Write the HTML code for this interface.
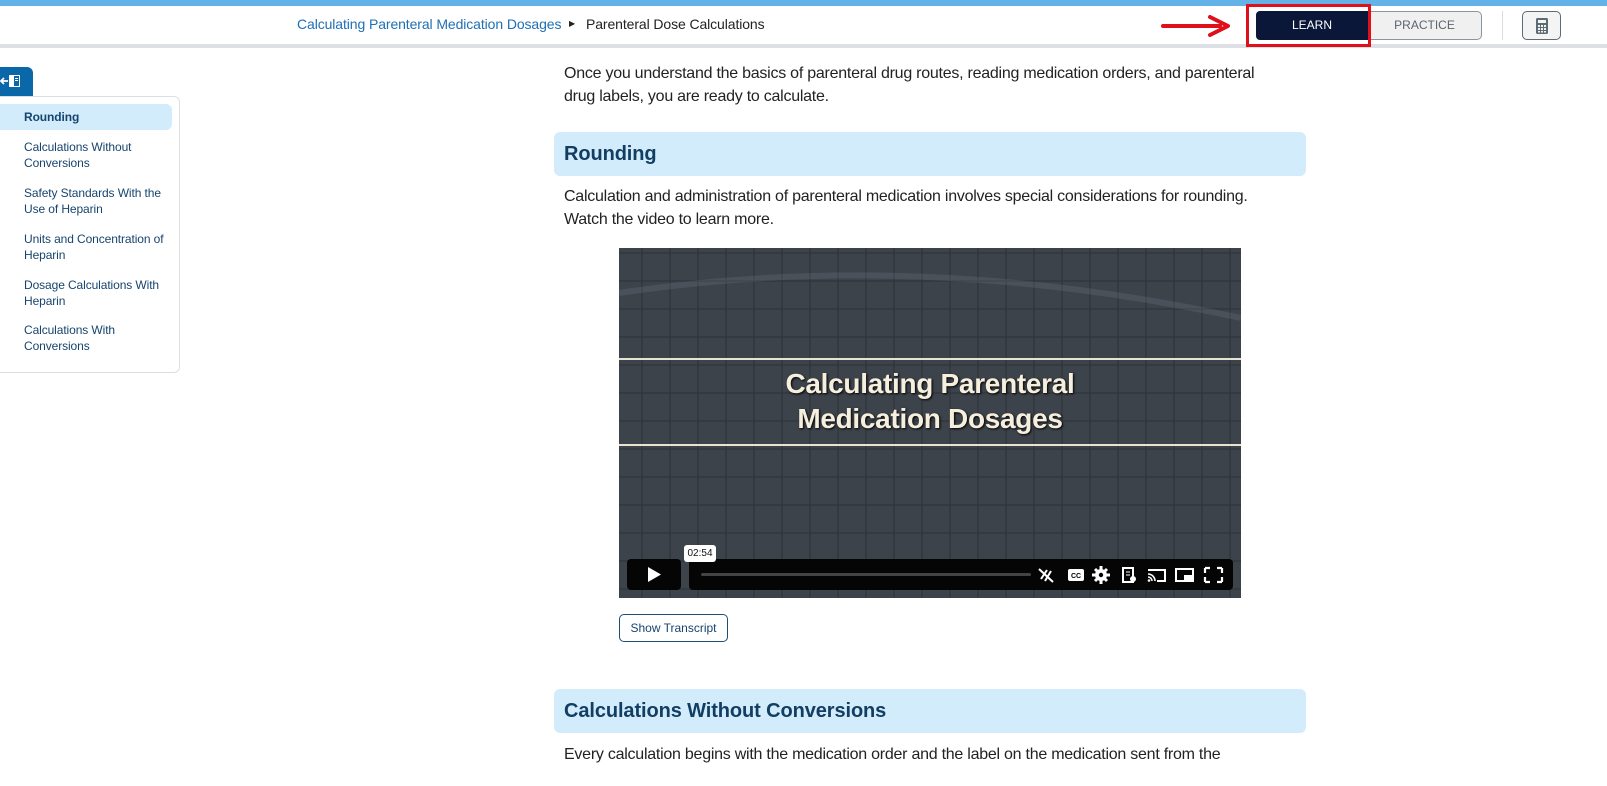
<!DOCTYPE html>
<html><head><meta charset="utf-8"><style>
*{margin:0;padding:0;box-sizing:border-box}
body{width:1607px;height:786px;overflow:hidden;background:#fff;font-family:"Liberation Sans",Arial,sans-serif;position:relative;color:#222}
.a{position:absolute}
.top{left:0;top:0;width:1607px;height:6px;background:#63b3e8}
.hdr{left:0;top:44px;width:1607px;height:4px;background:#dde1e5}
.bc{top:16px;left:297px;font-size:14px;color:#1f6fb4;letter-spacing:-0.1px}
.bc2{top:16px;left:586px;font-size:14px;color:#222;letter-spacing:-0.1px}
.learn{left:1256px;top:11px;width:112px;height:29px;background:#0a1738;border-radius:4px 0 0 4px;color:#fff;font-size:12px;text-align:center;line-height:29px}
.prac{left:1368px;top:11px;width:114px;height:29px;background:#f0f0f0;border:1px solid #8a959e;border-left:none;border-radius:0 5px 5px 0;color:#5a6570;font-size:12px;text-align:center;line-height:27px}
.red{left:1246px;top:4px;width:125px;height:43px;border:3px solid #e0101a}
.sep{left:1502px;top:11px;width:1px;height:29px;background:#ddd}
.calc{left:1522px;top:11px;width:39px;height:29px;border:1px solid #5d6b75;border-radius:5px;background:#f4f4f4}
.tab{left:0;top:67px;width:33px;height:29px;background:#0a67a8;border-radius:0 6px 0 0}
.side{left:-10px;top:96px;width:190px;height:277px;border:1px solid #dcdfe2;border-radius:0 6px 6px 0}
.sel{left:0;top:104px;width:172px;height:26px;background:#d2ecfc;border-radius:0 6px 6px 0}
.it{left:24px;font-size:12px;color:#17446e;line-height:16px;letter-spacing:-0.1px}
p.t{position:absolute;left:564px;font-size:16px;line-height:23px;color:#222;letter-spacing:-0.25px}
.h{left:554px;width:752px;height:44px;background:#d2ecfc;border-radius:6px;padding-left:10px;font-size:20px;font-weight:bold;color:#123e63;line-height:44px;letter-spacing:-0.1px}
.vid{left:619px;top:248px;width:622px;height:350px;background-color:#3d434b;
background-image:linear-gradient(90deg,rgba(48,52,58,.6) 2px,transparent 2px),linear-gradient(rgba(48,52,58,.6) 2px,transparent 2px);background-size:28px 28px;background-position:-6px 4px;overflow:hidden}
.band{left:0;top:110px;width:622px;height:88px;border-top:2px solid #e8e2d0;border-bottom:2px solid #e8e2d0}
.vt{left:0;top:118px;width:622px;text-align:center;color:#f6efde;font-weight:bold;font-size:28px;line-height:35px;text-shadow:1px 1px 2px #000;letter-spacing:-0.3px}
.play{left:8px;top:311px;width:54px;height:31px;background:#050505;border-radius:4px}
.bar{left:70px;top:311px;width:544px;height:31px;background:#050505;border-radius:4px}
.prog{left:12px;top:14px;width:330px;height:3px;background:#444;border-radius:2px}
.tip{left:65px;top:297px;width:32px;height:17px;background:#fff;border-radius:3px;font-size:10px;text-align:center;line-height:17px;color:#111}
.btn{left:619px;top:614px;width:109px;height:28px;border:1px solid #1e4c74;border-radius:5px;font-size:12px;color:#17446e;text-align:center;line-height:26px}
</style></head><body>
<div class="a top"></div>
<div class="a hdr"></div>
<div class="a bc">Calculating Parenteral Medication Dosages</div>
<div class="a" style="left:569px;top:19px;font-size:8px;color:#222">&#9654;</div>
<div class="a bc2">Parenteral Dose Calculations</div>
<svg class="a" style="left:1160px;top:14px" width="72" height="24" viewBox="0 0 72 24"><path d="M3 12H60" stroke="#e0101a" stroke-width="4" stroke-linecap="round"/><path d="M50 3L68 12L50 21" fill="none" stroke="#e0101a" stroke-width="4" stroke-linecap="round" stroke-linejoin="round"/></svg>
<div class="a learn">LEARN</div>
<div class="a prac">PRACTICE</div>
<div class="a red"></div>
<div class="a sep"></div>
<div class="a calc"><svg width="39" height="29" viewBox="0 0 39 29"><rect x="13" y="6" width="12" height="16" rx="1.5" fill="#5d6b75"/><rect x="15" y="8" width="8" height="3" fill="#f4f4f4"/><g fill="#f4f4f4"><rect x="15" y="13" width="2" height="2"/><rect x="18" y="13" width="2" height="2"/><rect x="21" y="13" width="2" height="2"/><rect x="15" y="16" width="2" height="2"/><rect x="18" y="16" width="2" height="2"/><rect x="21" y="16" width="2" height="2"/><rect x="15" y="19" width="2" height="1.5"/><rect x="18" y="19" width="2" height="1.5"/><rect x="21" y="19" width="2" height="1.5"/></g></svg></div>
<div class="a tab"><svg width="33" height="29" viewBox="0 0 33 29"><path d="M1 14H8M4 11L1 14L4 17" stroke="#fff" stroke-width="1.8" fill="none"/><rect x="9" y="8" width="11" height="12" fill="#fff"/><rect x="14" y="9" width="5" height="10" fill="#0a67a8"/><rect x="15" y="11" width="3" height="1" fill="#fff"/><rect x="15" y="13" width="3" height="1" fill="#fff"/></svg></div>
<div class="a side"></div>
<div class="a sel"></div>
<div class="a it" style="top:109px;font-weight:bold">Rounding</div>
<div class="a it" style="top:139px">Calculations Without<br>Conversions</div>
<div class="a it" style="top:185px">Safety Standards With the<br>Use of Heparin</div>
<div class="a it" style="top:231px">Units and Concentration of<br>Heparin</div>
<div class="a it" style="top:277px">Dosage Calculations With<br>Heparin</div>
<div class="a it" style="top:322px">Calculations With<br>Conversions</div>
<p class="t" style="top:62px">Once you understand the basics of parenteral drug routes, reading medication orders, and parenteral<br>drug labels, you are ready to calculate.</p>
<div class="a h" style="top:132px">Rounding</div>
<p class="t" style="top:185px">Calculation and administration of parenteral medication involves special considerations for rounding.<br>Watch the video to learn more.</p>
<div class="a vid">
<svg class="a" style="left:0;top:0" width="622" height="110"><path d="M0 45Q300 0 622 70" stroke="rgba(120,125,135,.25)" stroke-width="6" fill="none"/></svg>
<div class="a band"></div>
<div class="a vt">Calculating Parenteral<br>Medication Dosages</div>
<div class="a play"><svg width="54" height="31"><path d="M21 8L34 15.5L21 23Z" fill="#fff"/></svg></div>
<div class="a bar"><div class="a prog"></div>
<svg class="a" style="left:348px;top:6px" width="196" height="20" viewBox="0 0 196 20" fill="#fff">
<path d="M4 14L10 5M8 16L14 6M2 4L16 17" stroke="#fff" stroke-width="2"/>
<rect x="31" y="4" width="16" height="12" rx="2"/><text x="39" y="13" font-size="7" font-weight="bold" text-anchor="middle" fill="#000" font-family="Liberation Sans">CC</text>
<circle cx="64" cy="10" r="6"/><path d="M64 1V19M55 10H73M58 4L70 16M70 4L58 16" stroke="#fff" stroke-width="3"/><circle cx="64" cy="10" r="2.2" fill="#050505"/>
<path d="M86 3H96V17H86Z" fill="none" stroke="#fff" stroke-width="2"/><circle cx="96" cy="14" r="3"/><path d="M89 7H93M89 10H93" stroke="#fff"/>
<path d="M111 5H128V16H120" fill="none" stroke="#fff" stroke-width="2"/><path d="M111 9A7 7 0 0 1 118 16M111 12A4 4 0 0 1 115 16" fill="none" stroke="#fff" stroke-width="1.6"/><circle cx="112" cy="15.5" r="1.3"/>
<rect x="139" y="4" width="17" height="12" fill="none" stroke="#fff" stroke-width="2"/><rect x="147" y="10" width="9" height="7"/>
<path d="M168 3H173M168 3V8M185 3H180M185 3V8M168 17H173M168 17V12M185 17H180M185 17V12" stroke="#fff" stroke-width="2.2" fill="none"/>
</svg></div>
<div class="a tip">02:54</div>
</div>
<div class="a btn">Show Transcript</div>
<div class="a h" style="top:689px">Calculations Without Conversions</div>
<p class="t" style="top:743px">Every calculation begins with the medication order and the label on the medication sent from the</p>
</body></html>
